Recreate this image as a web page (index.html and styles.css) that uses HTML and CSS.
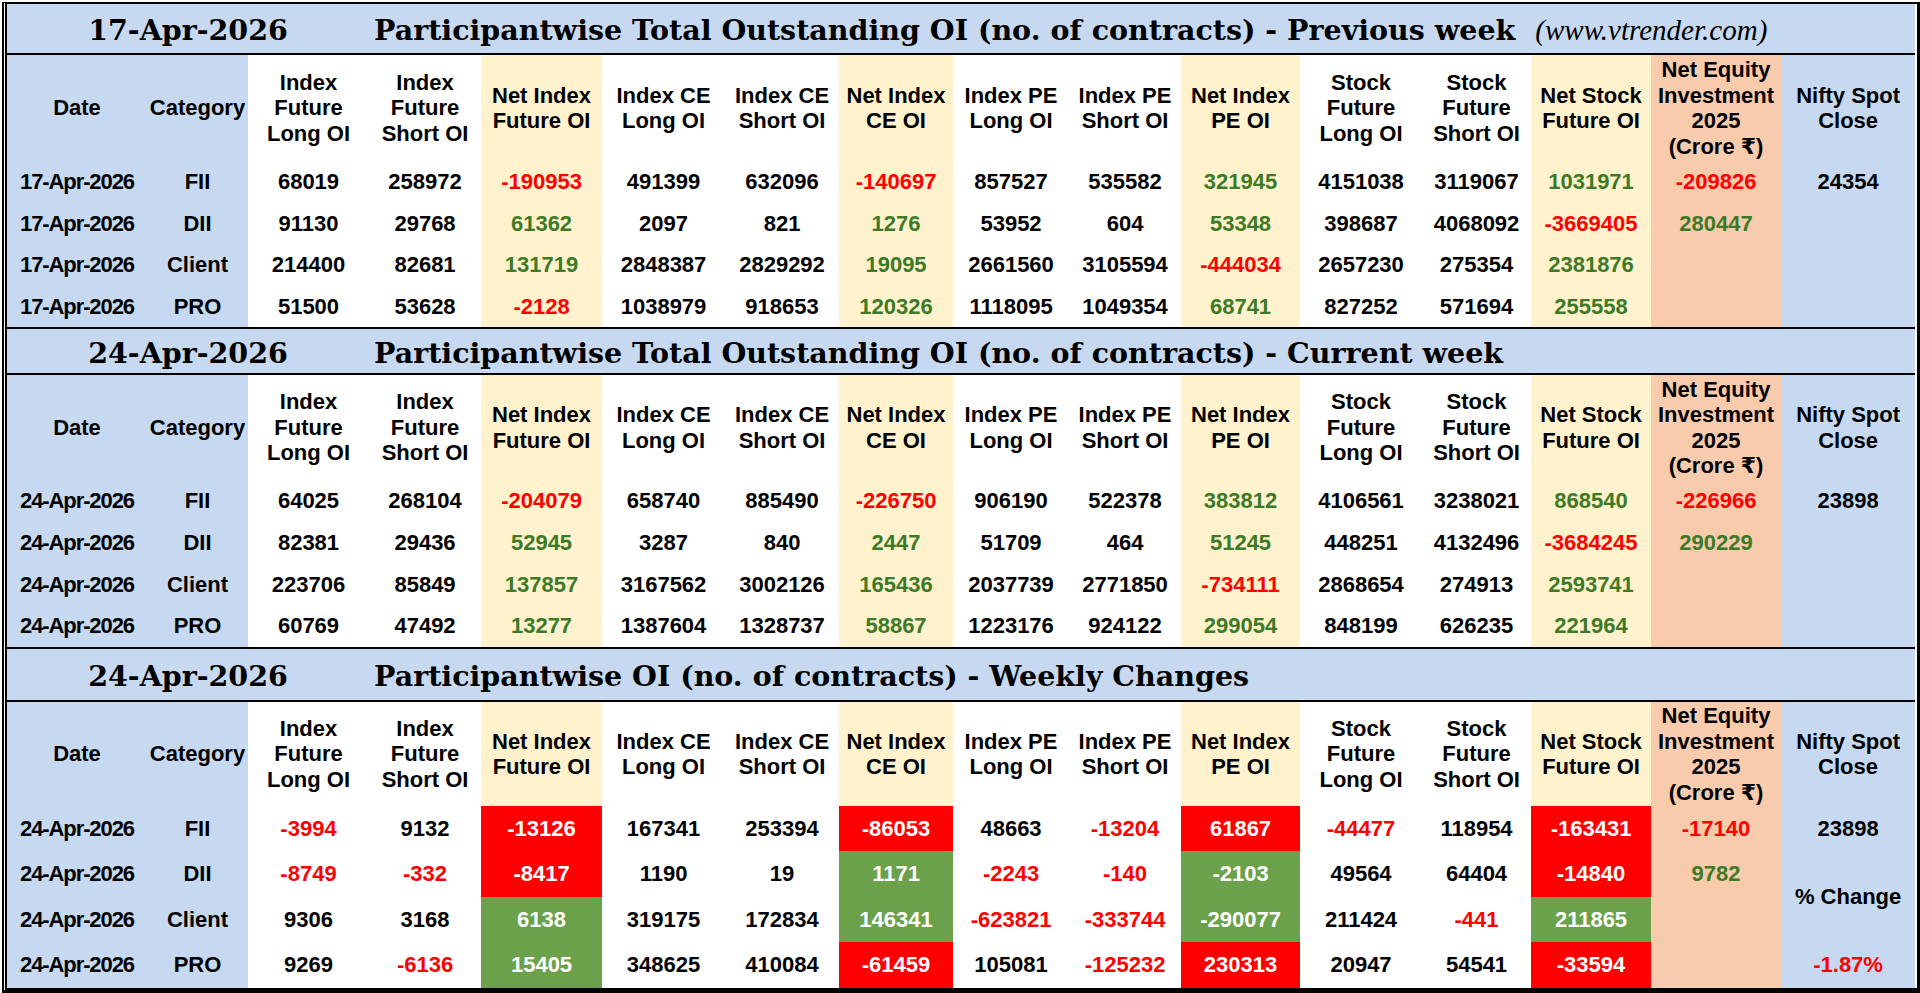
FILE: index.html
```html
<!DOCTYPE html>
<html>
<head>
<meta charset="utf-8">
<title>Participantwise OI</title>
<link rel="stylesheet" href="styles.css">
</head>
<body>
<div class="sheet">
  <table class="sec s1">
    <colgroup><col class="c1"><col class="c2"><col class="c3"><col class="c4"><col class="c5"><col class="c6"><col class="c7"><col class="c8"><col class="c9"><col class="c10"><col class="c11"><col class="c12"><col class="c13"><col class="c14"><col class="c15"><col class="c16"></colgroup>
    <tr class="ttl t1"><td colspan="3" class="tdate">17-Apr-2026</td><td colspan="13" class="tname">Participantwise Total Outstanding OI (no. of contracts) - Previous week<span class="site">(www.vtrender.com)</span></td></tr>
    <tr class="hdr h1"><td>Date</td><td>Category</td><td>Index<br>Future<br>Long OI</td><td>Index<br>Future<br>Short OI</td><td>Net Index<br>Future OI</td><td>Index CE<br>Long OI</td><td>Index CE<br>Short OI</td><td>Net Index<br>CE OI</td><td>Index PE<br>Long OI</td><td>Index PE<br>Short OI</td><td>Net Index<br>PE OI</td><td>Stock<br>Future<br>Long OI</td><td>Stock<br>Future<br>Short OI</td><td>Net Stock<br>Future OI</td><td>Net Equity<br>Investment<br>2025<br>(Crore ₹)</td><td>Nifty Spot<br>Close</td></tr>
    <tr class="ra"><td class="dt">17-Apr-2026</td><td>FII</td><td>68019</td><td>258972</td><td class="r">-190953</td><td>491399</td><td>632096</td><td class="r">-140697</td><td>857527</td><td>535582</td><td class="g">321945</td><td>4151038</td><td>3119067</td><td class="g">1031971</td><td class="r">-209826</td><td>24354</td></tr>
    <tr class="rb"><td class="dt">17-Apr-2026</td><td>DII</td><td>91130</td><td>29768</td><td class="g">61362</td><td>2097</td><td>821</td><td class="g">1276</td><td>53952</td><td>604</td><td class="g">53348</td><td>398687</td><td>4068092</td><td class="r">-3669405</td><td class="g">280447</td><td></td></tr>
    <tr class="ra"><td class="dt">17-Apr-2026</td><td>Client</td><td>214400</td><td>82681</td><td class="g">131719</td><td>2848387</td><td>2829292</td><td class="g">19095</td><td>2661560</td><td>3105594</td><td class="r">-444034</td><td>2657230</td><td>275354</td><td class="g">2381876</td><td></td><td></td></tr>
    <tr class="rb"><td class="dt">17-Apr-2026</td><td>PRO</td><td>51500</td><td>53628</td><td class="r">-2128</td><td>1038979</td><td>918653</td><td class="g">120326</td><td>1118095</td><td>1049354</td><td class="g">68741</td><td>827252</td><td>571694</td><td class="g">255558</td><td></td><td></td></tr>
  </table>
  <table class="sec s2">
    <colgroup><col class="c1"><col class="c2"><col class="c3"><col class="c4"><col class="c5"><col class="c6"><col class="c7"><col class="c8"><col class="c9"><col class="c10"><col class="c11"><col class="c12"><col class="c13"><col class="c14"><col class="c15"><col class="c16"></colgroup>
    <tr class="ttl t2"><td colspan="3" class="tdate">24-Apr-2026</td><td colspan="13" class="tname">Participantwise Total Outstanding OI (no. of contracts) - Current week</td></tr>
    <tr class="hdr h2"><td>Date</td><td>Category</td><td>Index<br>Future<br>Long OI</td><td>Index<br>Future<br>Short OI</td><td>Net Index<br>Future OI</td><td>Index CE<br>Long OI</td><td>Index CE<br>Short OI</td><td>Net Index<br>CE OI</td><td>Index PE<br>Long OI</td><td>Index PE<br>Short OI</td><td>Net Index<br>PE OI</td><td>Stock<br>Future<br>Long OI</td><td>Stock<br>Future<br>Short OI</td><td>Net Stock<br>Future OI</td><td>Net Equity<br>Investment<br>2025<br>(Crore ₹)</td><td>Nifty Spot<br>Close</td></tr>
    <tr class="ra"><td class="dt">24-Apr-2026</td><td>FII</td><td>64025</td><td>268104</td><td class="r">-204079</td><td>658740</td><td>885490</td><td class="r">-226750</td><td>906190</td><td>522378</td><td class="g">383812</td><td>4106561</td><td>3238021</td><td class="g">868540</td><td class="r">-226966</td><td>23898</td></tr>
    <tr class="ra"><td class="dt">24-Apr-2026</td><td>DII</td><td>82381</td><td>29436</td><td class="g">52945</td><td>3287</td><td>840</td><td class="g">2447</td><td>51709</td><td>464</td><td class="g">51245</td><td>448251</td><td>4132496</td><td class="r">-3684245</td><td class="g">290229</td><td></td></tr>
    <tr class="rb"><td class="dt">24-Apr-2026</td><td>Client</td><td>223706</td><td>85849</td><td class="g">137857</td><td>3167562</td><td>3002126</td><td class="g">165436</td><td>2037739</td><td>2771850</td><td class="r">-734111</td><td>2868654</td><td>274913</td><td class="g">2593741</td><td></td><td></td></tr>
    <tr class="ra"><td class="dt">24-Apr-2026</td><td>PRO</td><td>60769</td><td>47492</td><td class="g">13277</td><td>1387604</td><td>1328737</td><td class="g">58867</td><td>1223176</td><td>924122</td><td class="g">299054</td><td>848199</td><td>626235</td><td class="g">221964</td><td></td><td></td></tr>
  </table>
  <table class="sec s3">
    <colgroup><col class="c1"><col class="c2"><col class="c3"><col class="c4"><col class="c5"><col class="c6"><col class="c7"><col class="c8"><col class="c9"><col class="c10"><col class="c11"><col class="c12"><col class="c13"><col class="c14"><col class="c15"><col class="c16"></colgroup>
    <tr class="ttl t3"><td colspan="3" class="tdate">24-Apr-2026</td><td colspan="13" class="tname">Participantwise OI (no. of contracts) - Weekly Changes</td></tr>
    <tr class="hdr h3"><td>Date</td><td>Category</td><td>Index<br>Future<br>Long OI</td><td>Index<br>Future<br>Short OI</td><td>Net Index<br>Future OI</td><td>Index CE<br>Long OI</td><td>Index CE<br>Short OI</td><td>Net Index<br>CE OI</td><td>Index PE<br>Long OI</td><td>Index PE<br>Short OI</td><td>Net Index<br>PE OI</td><td>Stock<br>Future<br>Long OI</td><td>Stock<br>Future<br>Short OI</td><td>Net Stock<br>Future OI</td><td>Net Equity<br>Investment<br>2025<br>(Crore ₹)</td><td>Nifty Spot<br>Close</td></tr>
    <tr class="rc"><td class="dt">24-Apr-2026</td><td>FII</td><td class="r">-3994</td><td>9132</td><td class="fr">-13126</td><td>167341</td><td>253394</td><td class="fr">-86053</td><td>48663</td><td class="r">-13204</td><td class="fr">61867</td><td class="r">-44477</td><td>118954</td><td class="fr">-163431</td><td class="r">-17140</td><td>23898</td></tr>
    <tr class="rd"><td class="dt">24-Apr-2026</td><td>DII</td><td class="r">-8749</td><td class="r">-332</td><td class="fr">-8417</td><td>1190</td><td>19</td><td class="fg">1171</td><td class="r">-2243</td><td class="r">-140</td><td class="fg">-2103</td><td>49564</td><td>64404</td><td class="fr">-14840</td><td class="g">9782</td><td rowspan="2" class="chg">% Change</td></tr>
    <tr class="rc"><td class="dt">24-Apr-2026</td><td>Client</td><td>9306</td><td>3168</td><td class="fg">6138</td><td>319175</td><td>172834</td><td class="fg">146341</td><td class="r">-623821</td><td class="r">-333744</td><td class="fg">-290077</td><td>211424</td><td class="r">-441</td><td class="fg">211865</td><td></td></tr>
    <tr class="rd"><td class="dt">24-Apr-2026</td><td>PRO</td><td>9269</td><td class="r">-6136</td><td class="fg">15405</td><td>348625</td><td>410084</td><td class="fr">-61459</td><td>105081</td><td class="r">-125232</td><td class="fr">230313</td><td>20947</td><td>54541</td><td class="fr">-33594</td><td></td><td class="r">-1.87%</td></tr>
  </table>
</div>
</body>
</html>
```

FILE: styles.css
```css
* { box-sizing: border-box; }
html, body { margin: 0; padding: 0; background: #ffffff; }
body {
  padding: 2px 0 0 2px;
  font-family: "Liberation Sans", Arial, "DejaVu Sans", sans-serif;
}
.sheet {
  width: 1918px;
  border-left: 5px double #000;
  border-right: 3px solid #000;
  border-top: 2px solid #000;
  border-bottom: 5px solid #000;
}
.sec {
  width: 1908px;
  table-layout: fixed;
  border-collapse: separate;
  border-spacing: 0;
}
.sec + .sec { border-top: 2px solid #000; }
td {
  padding: 0;
  text-align: center;
  vertical-align: middle;
  font-weight: bold;
  font-size: 22px;
  color: #000;
  white-space: nowrap;
  overflow: hidden;
}
.c1 { width: 140px; background: #c6d9f1; }
.c2 { width: 101px; background: #c6d9f1; }
.c3 { width: 121px; background: #ffffff; }
.c4 { width: 112px; background: #ffffff; }
.c5 { width: 121px; background: #fff2cc; }
.c6 { width: 123px; background: #ffffff; }
.c7 { width: 114px; background: #ffffff; }
.c8 { width: 114px; background: #fff2cc; }
.c9 { width: 116px; background: #ffffff; }
.c10 { width: 112px; background: #ffffff; }
.c11 { width: 119px; background: #fff2cc; }
.c12 { width: 122px; background: #ffffff; }
.c13 { width: 109px; background: #ffffff; }
.c14 { width: 120px; background: #fff2cc; }
.c15 { width: 130px; background: #f8cbad; }
.c16 { width: 134px; background: #c6d9f1; }

.ttl td {
  background: #c6d9f1;
  border-bottom: 2px solid #000;
  font-family: "DejaVu Serif", "Liberation Serif", serif;
  font-size: 28.5px;
  font-weight: bold;
  padding-top: 3px;
}
.t1 { height: 51px; }
.t2 { height: 46px; }
.t3 { height: 53px; }
.tname { text-align: left; padding-left: 5px; }
.site {
  font-family: "Liberation Serif", serif;
  font-style: italic;
  font-weight: normal;
  font-size: 29px;
  margin-left: 20px;
}
.hdr td { line-height: 25.5px; }
.h1 { height: 106px; }
.h2 { height: 105px; }
.h3 { height: 104px; }
.ra { height: 42px; }
.rb { height: 41px; }
.rc { height: 45px; }
.rd { height: 46px; }
.dt { font-size: 22px; letter-spacing: -1.1px; }
.r { color: #ff0000; }
.g { color: #3c7a27; }
.fr { background: #ff0000; color: #ffffff; }
.fg { background: #6ba14b; color: #ffffff; }
```
